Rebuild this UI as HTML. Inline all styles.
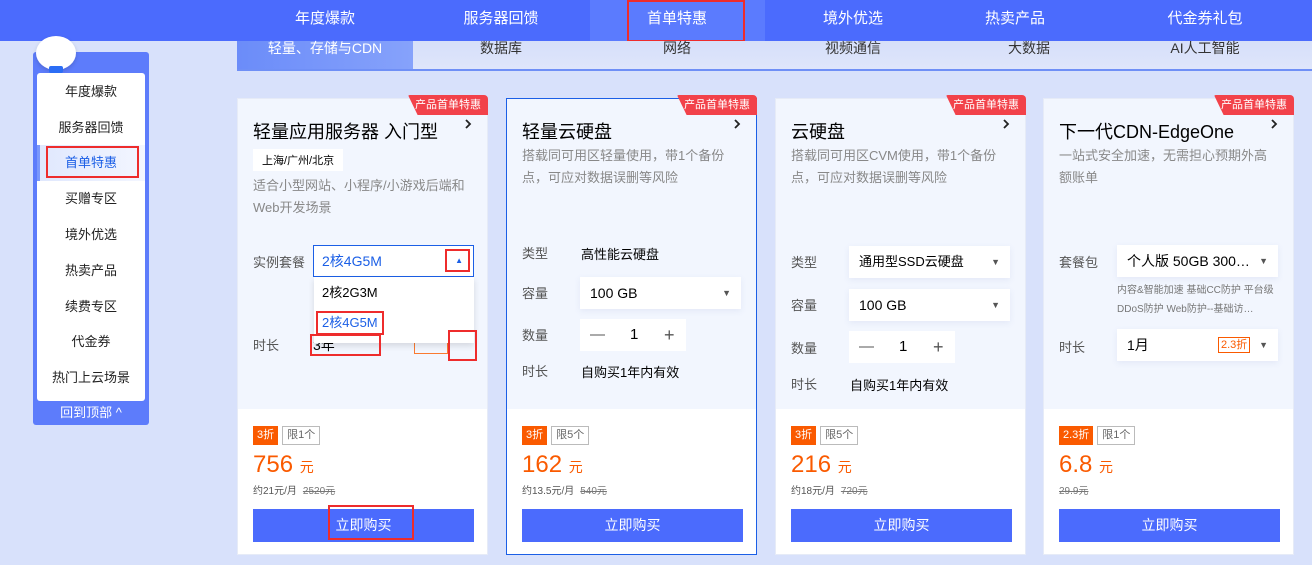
<!DOCTYPE html>
<html><head><meta charset="utf-8"><style>
*{margin:0;padding:0;box-sizing:border-box}
body{width:1312px;height:565px;overflow:hidden;background:#d8e1fb;font-family:"Liberation Sans","Noto Sans CJK SC",sans-serif;position:relative;color:#000}
.a{position:absolute}
.top{left:0;top:0;width:1312px;height:41px;background:#4b6bfd}
.nav{top:0;height:41px;line-height:38px;color:#fff;font-size:15px;text-align:center;width:170px}
.tab{top:41px;height:29px;line-height:14px;font-size:14px;color:#333;text-align:center;width:170px;padding-top:0}
.card{width:251px;height:457px;top:98px;background:#fff;border:1px solid #e6ebf7}
.up{left:0;top:0;width:100%;height:310px;background:#f2f6fe}
.badge{right:-1px;top:-4px;height:20px;width:80px;background:#f2424a;color:#fff;font-size:11px;line-height:20px;text-align:center;border-radius:2px 4px 0 0;clip-path:polygon(8% 0,100% 0,100% 100%,12% 100%,0 0)}
.t{left:15px;top:19px;font-size:18px}
.arr{right:14px;top:20px;width:10px;height:10px}
.d{left:15px;font-size:13px;color:#888;line-height:22px;width:220px}
.lab{left:15px;font-size:13px;color:#555}
.sel{background:#fff;height:32px;font-size:14px;line-height:32px;padding-left:10px;box-shadow:0 2px 6px rgba(120,140,200,.12)}
.car{right:10px;top:0;font-size:9px;color:#555}
.tg1{background:#fa5a00;color:#fff;font-size:11px;height:19px;line-height:19px;padding:0 4px;display:inline-block}
.tg2{border:1px solid #bbb;color:#666;font-size:11px;height:19px;line-height:17px;padding:0 4px;display:inline-block;margin-left:4px}
.price{left:15px;top:352px;color:#fa5a00;font-size:24px}
.price small{font-size:14px}
.sub{left:15px;top:383px;font-size:10px;color:#555}
.sub s{margin-left:6px;color:#777}
.btn{left:15px;top:410px;width:221px;height:33px;background:#4b6bfd;color:#fff;font-size:14px;line-height:33px;text-align:center}
.red{border:2px solid #ee2c2c}
.side{left:33px;top:52px;width:116px;height:373px;background:#5d7cfb;border-radius:3px}
.sp{left:37px;top:73px;width:108px;height:328px;background:#fff;border-radius:3px}
.si{left:37px;width:108px;text-align:center;font-size:13px;height:36px;line-height:36px;color:#222}
</style></head><body>
<div class="a top"></div>
<div class="a" style="left:590px;top:0;width:175px;height:41px;background:#5b7bfe"></div>
<div class="a nav" style="left:240px">年度爆款</div>
<div class="a nav" style="left:416px">服务器回馈</div>
<div class="a nav" style="left:592px">首单特惠</div>
<div class="a nav" style="left:768px">境外优选</div>
<div class="a nav" style="left:930px">热卖产品</div>
<div class="a nav" style="left:1120px">代金券礼包</div>
<div class="a red" style="left:627px;top:0;width:118px;height:42px"></div>

<div class="a" style="left:237px;top:41px;width:1075px;height:30px;background:linear-gradient(#d6dff9,#dfe6fb)"></div>
<div class="a" style="left:237px;top:41px;width:176px;height:30px;background:linear-gradient(90deg,#6b8cf9,#86a2fb)"></div>
<div class="a" style="left:237px;top:69px;width:1075px;height:2px;background:#6f8ff6"></div>
<div class="a tab" style="left:240px;color:#fff">轻量、存储与CDN</div>
<div class="a tab" style="left:416px">数据库</div>
<div class="a tab" style="left:592px">网络</div>
<div class="a tab" style="left:768px">视频通信</div>
<div class="a tab" style="left:944px">大数据</div>
<div class="a tab" style="left:1120px">AI人工智能</div>

<div class="a side"></div>
<div class="a" style="left:36px;top:36px;width:40px;height:34px;background:#fff;border-radius:50%;box-shadow:0 2px 4px rgba(0,0,0,.15)"></div>
<div class="a" style="left:49px;top:66px;width:14px;height:7px;background:#2b6df5;border-radius:2px"></div>
<div class="a sp"></div>
<div class="a" style="left:37px;top:145px;width:108px;height:36px;background:linear-gradient(90deg,#dfe7fd,#f3f6ff)"></div>
<div class="a" style="left:37px;top:145px;width:3px;height:36px;background:#7a97fb"></div>
<div class="a si" style="top:74px">年度爆款</div>
<div class="a si" style="top:110px">服务器回馈</div>
<div class="a si" style="top:145px;color:#1a5ee6">首单特惠</div>
<div class="a si" style="top:181px">买赠专区</div>
<div class="a si" style="top:217px">境外优选</div>
<div class="a si" style="top:253px">热卖产品</div>
<div class="a si" style="top:289px">续费专区</div>
<div class="a si" style="top:324px">代金券</div>
<div class="a si" style="top:360px">热门上云场景</div>
<div class="a red" style="left:46px;top:146px;width:93px;height:32px"></div>
<div class="a" style="left:33px;top:402px;width:116px;text-align:center;color:#fff;font-size:13px">回到顶部 ^</div>

<!-- card 1 -->
<div class="a card" style="left:237px">
<div class="a up"></div>
<div class="a badge">产品首单特惠</div>
<div class="a t">轻量应用服务器 入门型</div><svg class="a arr" viewBox="0 0 10 10"><path d="M3 1l4 4-4 4" fill="none" stroke="#222" stroke-width="1.8"/></svg>
<div class="a" style="left:15px;top:50px;background:#fff;font-size:11px;padding:3px 9px">上海/广州/北京</div>
<div class="a d" style="top:76px">适合小型网站、小程序/小游戏后端和Web开发场景</div>
<div class="a lab" style="top:153px">实例套餐</div>
<div class="a lab" style="top:236px">时长</div>
<div class="a" style="left:75px;top:236px;font-size:14px">3年</div>
<div class="a" style="left:176px;top:238px;border:1px solid #fa7a30;color:#fa7a30;font-size:11px;width:34px;height:17px"></div>
<div class="a" style="left:75px;top:146px;width:161px;height:32px;border:1px solid #1b5fe6;background:#fff;font-size:14px;line-height:30px;padding-left:8px;color:#1b5fe6">2核4G5M<span style="position:absolute;right:10px;font-size:8px">▲</span></div>
<div class="a" style="left:76px;top:178px;width:160px;height:66px;background:#fff;box-shadow:0 3px 6px rgba(0,0,0,.12)">
<div style="padding-left:8px;font-size:13px;line-height:30px;margin-top:1px">2核2G3M</div>
<div style="padding-left:8px;font-size:13px;line-height:30px;color:#1b5fe6">2核4G5M</div></div>
<div class="a red" style="left:207px;top:150px;width:25px;height:23px"></div>
<div class="a red" style="left:78px;top:212px;width:68px;height:24px"></div>
<div class="a red" style="left:72px;top:235px;width:71px;height:22px"></div>
<div class="a red" style="left:210px;top:231px;width:29px;height:31px"></div>
<div class="a" style="left:15px;top:326px"><span class="tg1">3折</span><span class="tg2">限1个</span></div>
<div class="a price">756 <small>元</small></div>
<div class="a sub">约21元/月<s>2520元</s></div>
<div class="a btn">立即购买</div>
<div class="a red" style="left:90px;top:406px;width:86px;height:35px"></div>
</div>

<!-- card 2 -->
<div class="a card" style="left:506px;border-color:#1b5fe6">
<div class="a up"></div>
<div class="a badge">产品首单特惠</div>
<div class="a t">轻量云硬盘</div><svg class="a arr" viewBox="0 0 10 10"><path d="M3 1l4 4-4 4" fill="none" stroke="#222" stroke-width="1.8"/></svg>
<div class="a d" style="top:46px">搭载同可用区轻量使用，带1个备份点，可应对数据误删等风险</div>
<div class="a lab" style="top:144px">类型</div><div class="a" style="left:74px;top:145px;font-size:13px">高性能云硬盘</div>
<div class="a lab" style="top:184px">容量</div>
<div class="a sel" style="left:73px;top:178px;width:161px">100 GB<span class="a car" style="top:0">▼</span></div>
<div class="a lab" style="top:226px">数量</div>
<div class="a" style="left:73px;top:220px;width:106px;height:32px;background:#fff;font-size:15px;line-height:32px;color:#555"><span style="position:absolute;left:10px">—</span><span style="position:absolute;left:50px;color:#000">1</span><span style="position:absolute;left:84px;font-size:18px">+</span></div>
<div class="a lab" style="top:262px">时长</div><div class="a" style="left:74px;top:263px;font-size:13px">自购买1年内有效</div>
<div class="a" style="left:15px;top:326px"><span class="tg1">3折</span><span class="tg2">限5个</span></div>
<div class="a price">162 <small>元</small></div>
<div class="a sub">约13.5元/月<s>540元</s></div>
<div class="a btn">立即购买</div>
</div>

<!-- card 3 -->
<div class="a card" style="left:775px">
<div class="a up"></div>
<div class="a badge">产品首单特惠</div>
<div class="a t">云硬盘</div><svg class="a arr" viewBox="0 0 10 10"><path d="M3 1l4 4-4 4" fill="none" stroke="#222" stroke-width="1.8"/></svg>
<div class="a d" style="top:46px">搭载同可用区CVM使用，带1个备份点，可应对数据误删等风险</div>
<div class="a lab" style="top:153px">类型</div>
<div class="a sel" style="left:73px;top:147px;width:161px;font-size:13px">通用型SSD云硬盘<span class="a car">▼</span></div>
<div class="a lab" style="top:196px">容量</div>
<div class="a sel" style="left:73px;top:190px;width:161px">100 GB<span class="a car">▼</span></div>
<div class="a lab" style="top:239px">数量</div>
<div class="a" style="left:73px;top:232px;width:106px;height:32px;background:#fff;font-size:15px;line-height:32px;color:#555"><span style="position:absolute;left:10px">—</span><span style="position:absolute;left:50px;color:#000">1</span><span style="position:absolute;left:84px;font-size:18px">+</span></div>
<div class="a lab" style="top:275px">时长</div><div class="a" style="left:74px;top:276px;font-size:13px">自购买1年内有效</div>
<div class="a" style="left:15px;top:326px"><span class="tg1">3折</span><span class="tg2">限5个</span></div>
<div class="a price">216 <small>元</small></div>
<div class="a sub">约18元/月<s>720元</s></div>
<div class="a btn">立即购买</div>
</div>

<!-- card 4 -->
<div class="a card" style="left:1043px">
<div class="a up"></div>
<div class="a badge">产品首单特惠</div>
<div class="a t">下一代CDN-EdgeOne</div><svg class="a arr" viewBox="0 0 10 10"><path d="M3 1l4 4-4 4" fill="none" stroke="#222" stroke-width="1.8"/></svg>
<div class="a d" style="top:46px;width:215px">一站式安全加速，无需担心预期外高额账单</div>
<div class="a lab" style="top:153px">套餐包</div>
<div class="a sel" style="left:73px;top:146px;width:161px">个人版 50GB 300…<span class="a car">▼</span></div>
<div class="a" style="left:73px;top:182px;width:165px;font-size:10px;color:#777;line-height:19px">内容&amp;智能加速 基础CC防护 平台级DDoS防护 Web防护--基础访…</div>
<div class="a lab" style="top:238px">时长</div>
<div class="a sel" style="left:73px;top:230px;width:161px">1月<span class="a" style="left:101px;top:8px;border:1px solid #fa5a00;color:#fa5a00;font-size:11px;line-height:14px;padding:0 2px">2.3折</span><span class="a car">▼</span></div>
<div class="a" style="left:15px;top:326px"><span class="tg1">2.3折</span><span class="tg2">限1个</span></div>
<div class="a price">6.8 <small>元</small></div>
<div class="a sub"><s style="margin:0">29.9元</s></div>
<div class="a btn">立即购买</div>
</div>
</body></html>
